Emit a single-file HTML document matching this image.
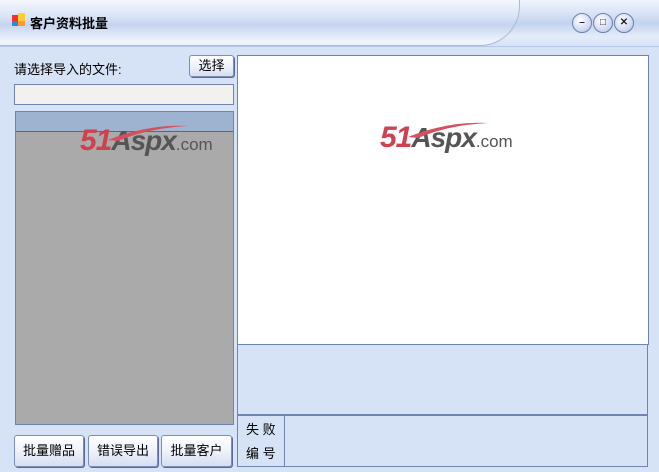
<!DOCTYPE html>
<html><head><meta charset="utf-8"><style>
*{margin:0;padding:0;box-sizing:border-box}
body{width:659px;height:472px;background:#d6e2f6;font-family:"Liberation Sans","Noto Sans CJK SC","WenQuanYi Zen Hei",sans-serif;font-size:13px;color:#000;position:relative;overflow:hidden}
.a{position:absolute}
.title{left:0;top:0;width:659px;height:47px;background:linear-gradient(#eef3fc 0%,#d9e3f5 30%,#c3d2ee 50%,#e4ecf9 80%,#d6e2f6 100%);border-bottom:1px solid #b9c8e6}
.tab{left:0;top:0;width:520px;height:46px;background:linear-gradient(#f4f7fd,#dbe5f7 35%,#c5d4ef 55%,#eef3fc 90%);border-radius:0 0 40px 0;border-bottom:1px solid #a9b9dc;border-right:1px solid #a9b9dc}
.btn{background:linear-gradient(#ffffff,#eef2fa 50%,#d7def0);border:1px solid #7b8db8;border-radius:3px;text-align:center;font-size:13px;box-shadow:1px 1px 0 #5a6a9a}
.cb{width:20px;height:20px;border-radius:50%;border:1px solid #6d7fae;background:radial-gradient(circle at 40% 35%,#fff,#c9d4ee 70%,#9fb0d8);top:13px;font-size:10px;font-weight:bold;text-align:center;line-height:18px;color:#223}
.logo{font-family:"Liberation Sans",sans-serif;font-weight:bold;font-style:italic;white-space:nowrap}
</style></head><body>
<div class="a title"></div>
<div class="a tab"></div>
<div class="a" style="left:12px;top:15px;width:6px;height:6px;background:#e33"></div>
<div class="a" style="left:18px;top:13px;width:7px;height:8px;background:#fc3"></div>
<div class="a" style="left:12px;top:21px;width:6px;height:5px;background:#38c"></div>
<div class="a" style="left:18px;top:21px;width:7px;height:5px;background:#f93"></div>
<div class="a" style="left:30px;top:13px;font-size:13px;font-weight:bold">客户资料批量</div>
<div class="a cb" style="left:572px">–</div>
<div class="a cb" style="left:593px">□</div>
<div class="a cb" style="left:614px">✕</div>

<div class="a" style="left:14px;top:59px">请选择导入的文件:</div>
<div class="a btn" style="left:189px;top:55px;width:45px;height:22px;line-height:20px">选择</div>
<div class="a" style="left:14px;top:84px;width:220px;height:21px;background:#f2f1ef;border:1px solid #7184ab"></div>

<div class="a" style="left:15px;top:111px;width:219px;height:314px;background:#aaaaaa;border:1px solid #7184ab"></div>
<div class="a" style="left:16px;top:112px;width:217px;height:20px;background:#9db3cf;border-bottom:1px solid #666"></div>

<div class="a" style="left:237px;top:55px;width:412px;height:290px;background:#fff;border:1px solid #7184ab"></div>
<div class="a" style="left:237px;top:344px;width:411px;height:71px;border-left:1px solid #7184ab;border-right:1px solid #7184ab"></div>
<div class="a" style="left:237px;top:414px;width:411px;height:53px;border:1px solid #7184ab;border-top:2px solid #7184ab"></div>
<div class="a" style="left:238px;top:416px;width:47px;height:50px;border-right:1px solid #7184ab"></div>
<div class="a" style="left:246px;top:418px;line-height:24px">失 败<br>编 号</div>

<div class="a btn" style="left:14px;top:435px;width:70px;height:32px;line-height:30px">批量赠品</div>
<div class="a btn" style="left:88px;top:435px;width:70px;height:32px;line-height:30px">错误导出</div>
<div class="a btn" style="left:161px;top:435px;width:71px;height:32px;line-height:30px">批量客户</div>

<div class="a logo" style="left:80px;top:124px">
<svg class="a" style="left:26px;top:0px" width="84" height="18"><path d="M2 16 Q42 0 82 2 Q42 4 12 17Z" fill="#d5505e"/></svg>
<span style="font-size:30px;color:#d0404f;letter-spacing:-1px">51</span><span style="font-size:28px;color:#555;letter-spacing:-1px">Aspx</span><span style="font-size:17px;color:#555;font-weight:normal;font-style:normal">.com</span></div>
<div class="a logo" style="left:380px;top:121px">
<svg class="a" style="left:26px;top:0px" width="84" height="18"><path d="M2 16 Q42 0 82 2 Q42 4 12 17Z" fill="#d5505e"/></svg>
<span style="font-size:30px;color:#d0404f;letter-spacing:-1px">51</span><span style="font-size:28px;color:#555;letter-spacing:-1px">Aspx</span><span style="font-size:17px;color:#555;font-weight:normal;font-style:normal">.com</span></div>
</body></html>
